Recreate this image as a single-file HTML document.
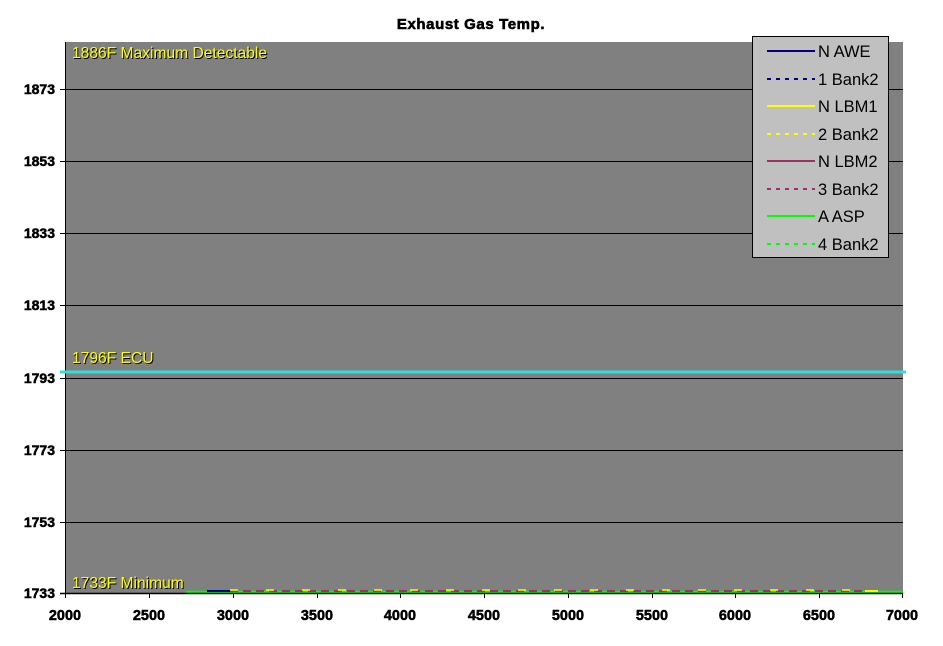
<!DOCTYPE html>
<html><head><meta charset="utf-8"><style>
html,body{margin:0;padding:0;background:#fff;}
svg{display:block;font-family:"Liberation Sans",Arial,sans-serif;}
</style></head><body>
<svg width="943" height="646" viewBox="0 0 943 646" xmlns="http://www.w3.org/2000/svg">
<rect width="943" height="646" fill="#fff"/>
<text x="471" y="29" text-anchor="middle" font-size="15" font-weight="bold" fill="#000" stroke="#000" stroke-width="0.6" letter-spacing="0.6">Exhaust Gas Temp.</text>
<rect x="65" y="42" width="838" height="551" fill="#808080"/>
<g stroke="#000" stroke-width="1">
<line x1="60" y1="89.5" x2="903" y2="89.5"/>
<line x1="60" y1="161.5" x2="903" y2="161.5"/>
<line x1="60" y1="233.5" x2="903" y2="233.5"/>
<line x1="60" y1="305.5" x2="903" y2="305.5"/>
<line x1="60" y1="378.5" x2="903" y2="378.5"/>
<line x1="60" y1="450.5" x2="903" y2="450.5"/>
<line x1="60" y1="522.5" x2="903" y2="522.5"/>
<line x1="65.5" y1="42" x2="65.5" y2="594"/>
</g>
<line x1="60" y1="372" x2="906" y2="372" stroke="#33dddd" stroke-width="3"/>
<g font-size="15.6" fill="#000">
<text x="73" y="59">1886F Maximum Detectable</text>
<text x="73" y="364">1796F ECU</text>
<text x="73" y="589">1733F Minimum</text>
</g>
<g font-size="15.6" fill="#ffff00">
<text x="72" y="58">1886F Maximum Detectable</text>
<text x="72" y="363">1796F ECU</text>
<text x="72" y="588">1733F Minimum</text>
</g>
<!-- data -->
<line x1="186" y1="592" x2="903" y2="592" stroke="#00ff00" stroke-width="2.5"/>
<line x1="207" y1="591" x2="230" y2="591" stroke="#000080" stroke-width="2"/>
<line x1="230" y1="591" x2="870" y2="591" stroke="#993366" stroke-width="2" stroke-dasharray="8,5"/>
<line x1="230" y1="590" x2="878" y2="590" stroke="#ffff00" stroke-width="1.5" stroke-dasharray="8,28"/>
<line x1="865" y1="591" x2="878" y2="591" stroke="#ffff00" stroke-width="2"/>
<line x1="60" y1="593.5" x2="903" y2="593.5" stroke="#000" stroke-width="1.5"/>
<g stroke="#000" stroke-width="1">
<line x1="65.5" y1="593" x2="65.5" y2="598"/>
<line x1="149.5" y1="593" x2="149.5" y2="598"/>
<line x1="233.5" y1="593" x2="233.5" y2="598"/>
<line x1="317.5" y1="593" x2="317.5" y2="598"/>
<line x1="400.5" y1="593" x2="400.5" y2="598"/>
<line x1="484.5" y1="593" x2="484.5" y2="598"/>
<line x1="568.5" y1="593" x2="568.5" y2="598"/>
<line x1="652.5" y1="593" x2="652.5" y2="598"/>
<line x1="735.5" y1="593" x2="735.5" y2="598"/>
<line x1="819.5" y1="593" x2="819.5" y2="598"/>
<line x1="902.5" y1="593" x2="902.5" y2="598"/>
</g>
<g font-size="14" font-weight="bold" fill="#000" stroke="#000" stroke-width="0.5" text-anchor="end">
<text x="55" y="94">1873</text>
<text x="55" y="166">1853</text>
<text x="55" y="238">1833</text>
<text x="55" y="310">1813</text>
<text x="55" y="383">1793</text>
<text x="55" y="455">1773</text>
<text x="55" y="527">1753</text>
<text x="55" y="598">1733</text>
</g>
<g font-size="14.5" font-weight="bold" fill="#000" stroke="#000" stroke-width="0.5" text-anchor="middle">
<text x="65" y="620">2000</text>
<text x="149" y="620">2500</text>
<text x="233" y="620">3000</text>
<text x="317" y="620">3500</text>
<text x="400" y="620">4000</text>
<text x="484" y="620">4500</text>
<text x="568" y="620">5000</text>
<text x="652" y="620">5500</text>
<text x="735" y="620">6000</text>
<text x="819" y="620">6500</text>
<text x="902" y="620">7000</text>
</g>
<!-- legend -->
<rect x="752.5" y="36.5" width="136" height="221" fill="#c0c0c0" stroke="#000" stroke-width="1"/>
<g stroke-width="2">
<line x1="767" y1="51" x2="815" y2="51" stroke="#000080"/>
<line x1="767" y1="79" x2="815" y2="79" stroke="#000080" stroke-dasharray="4,5"/>
<line x1="767" y1="106" x2="815" y2="106" stroke="#ffff00"/>
<line x1="767" y1="134" x2="815" y2="134" stroke="#ffff00" stroke-dasharray="4,5"/>
<line x1="767" y1="161" x2="815" y2="161" stroke="#993366"/>
<line x1="767" y1="189" x2="815" y2="189" stroke="#993366" stroke-dasharray="4,5"/>
<line x1="767" y1="216" x2="815" y2="216" stroke="#00ff00"/>
<line x1="767" y1="244" x2="815" y2="244" stroke="#00ff00" stroke-dasharray="4,5"/>
</g>
<g font-size="16.5" fill="#000">
<text x="818" y="57">N AWE</text>
<text x="818" y="85">1 Bank2</text>
<text x="818" y="112">N LBM1</text>
<text x="818" y="140">2 Bank2</text>
<text x="818" y="167">N LBM2</text>
<text x="818" y="195">3 Bank2</text>
<text x="818" y="222">A ASP</text>
<text x="818" y="250">4 Bank2</text>
</g>
</svg>
</body></html>
